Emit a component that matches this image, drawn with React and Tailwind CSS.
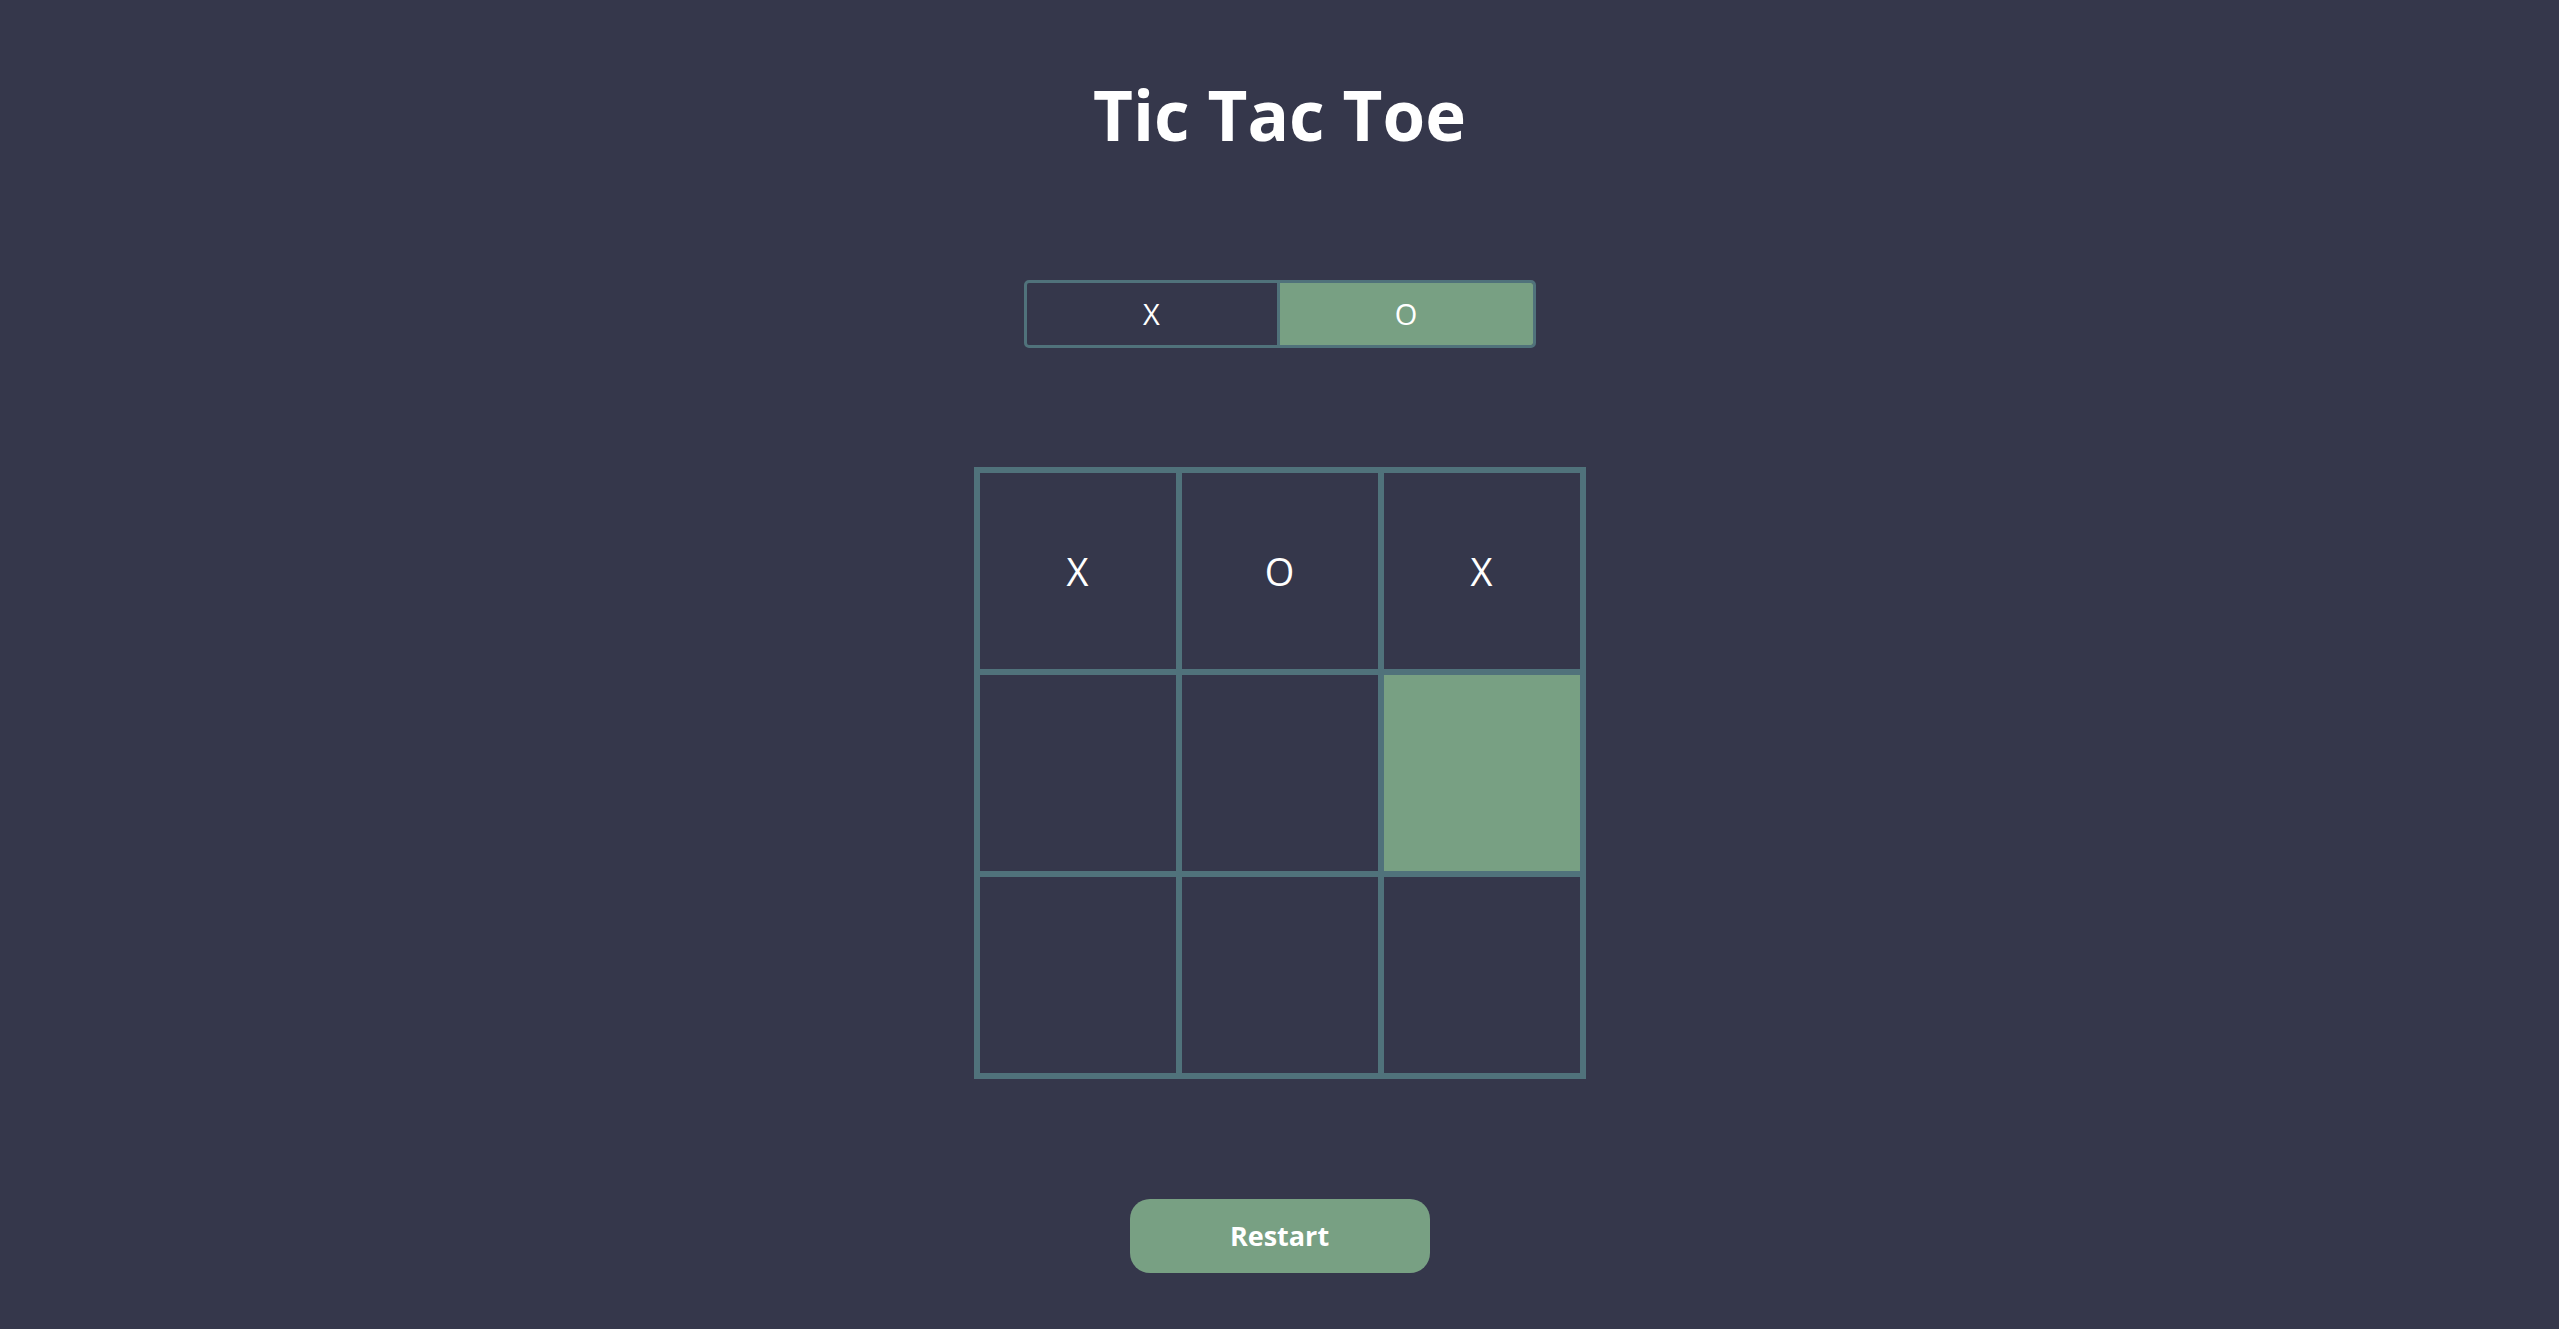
import { useState } from 'react'

const startBoard = ['X', 'O', 'X', '', '', '', '', '', '']

export default function App() {
  const [board, setBoard] = useState(startBoard)
  const [player, setPlayer] = useState('O')
  const [hover] = useState(5)

  const play = (i) => {
    if (board[i]) return
    const next = [...board]
    next[i] = player
    setBoard(next)
    setPlayer(player === 'X' ? 'O' : 'X')
  }

  return (
    <div
      className="min-h-screen bg-[#35374B] flex flex-col items-center text-white"
      style={{ fontFamily: '"Open Sans", "Noto Sans", sans-serif' }}
    >
      <h1 className="mt-[80px] text-[69px] leading-none font-bold">Tic Tac Toe</h1>

      <div className="mt-[131px] flex w-[512px] h-[68px] border-[3px] border-[#50727B] rounded-[5px] overflow-hidden">
        <button
          onClick={() => setPlayer('X')}
          className={`w-1/2 border-r-[3px] border-[#50727B] text-[29px] font-medium ${player === 'X' ? 'bg-[#78A083]' : ''}`}
        >
          X
        </button>
        <button
          onClick={() => setPlayer('O')}
          className={`w-1/2 text-[29px] font-medium ${player === 'O' ? 'bg-[#78A083]' : ''}`}
        >
          O
        </button>
      </div>

      <div className="mt-[119px] grid grid-cols-3 border-[3px] border-[#50727B]">
        {board.map((v, i) => (
          <button
            key={i}
            onClick={() => play(i)}
            className={`w-[202px] h-[202px] border-[3px] border-[#50727B] flex items-center justify-center text-[38px] font-medium ${i === hover ? 'bg-[#78A083]' : ''}`}
          >
            {v}
          </button>
        ))}
      </div>

      <button
        onClick={() => setBoard(Array(9).fill(''))}
        className="mt-[120px] w-[300px] h-[74px] rounded-[20px] bg-[#78A083] text-[27px] font-bold"
      >
        Restart
      </button>
    </div>
  )
}
